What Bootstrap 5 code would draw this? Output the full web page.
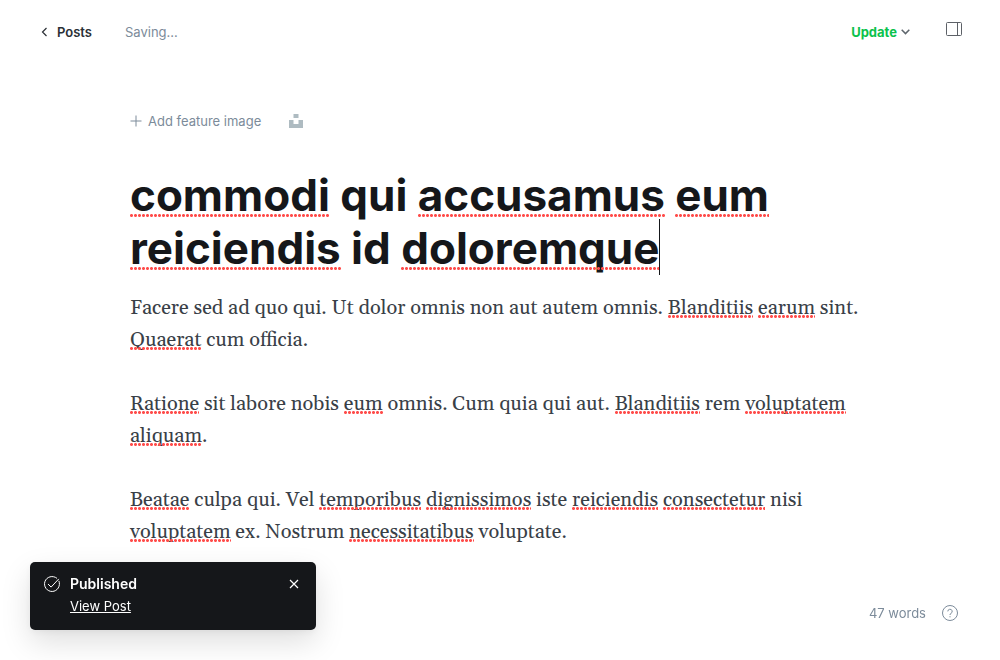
<!DOCTYPE html>
<html lang="en">
<head>
<meta charset="utf-8">
<meta name="viewport" content="width=device-width, initial-scale=1">
<title>Edit post</title>
<link href="https://cdn.jsdelivr.net/npm/bootstrap@5.3.0/dist/css/bootstrap.min.css" rel="stylesheet">
<style>
  body { font-family: Inter, "Liberation Sans", sans-serif; font-size: 13px; line-height: 20px; color: #15171a; background: #fff; }
  svg { display: block; fill: none; stroke: currentColor; }
  .topbar { padding: 22px 38px 0 40px; }
  .back-link { color: #2b3036; font-weight: 600; }
  .back-link + .muted { margin-left: 33px; }
  .muted { color: #7c8b9a; }
  .btn-plain { padding: 0; border: 0; background: none; color: inherit; font-size: inherit; line-height: inherit; }
  .update { color: #0bc24c; font-weight: 700; }
  .editor { max-width: 740px; margin: 69px auto 0; }
  .add-image { gap: 6px; margin-right: 28px; }
  .editor-title { margin: 38px 0 0; font-size: 44px; line-height: 53px; font-weight: 700; outline: 0; }
  .editor-body { margin-top: 17px; font-family: Georgia, Gelasio, "Liberation Serif", serif; font-size: 20px; line-height: 32px; color: #394047; outline: 0; }
  .editor-body p { margin: 0 0 32px; }
  .sp { position: relative; white-space: nowrap; }
  .sp::after { content: ""; position: absolute; left: 0; right: 0; bottom: 3px; height: 3px; background: radial-gradient(circle at 1.5px 1.5px, #ff4d4b 1px, transparent 2px) 0 0 / 4px 3px repeat-x; }
  .editor-title .sp::after { bottom: 5px; }
  .caret { position: absolute; width: 1px; height: 56px; background: #15171a; margin-top: -3px; }
  .notice { left: 30px; bottom: 30px; width: 286px; padding: 12px 17px 14px 14px; border-radius: 5px; background: #15171a; color: #fff; box-shadow: 0 12px 30px rgba(0,0,0,.13), 0 2px 8px rgba(0,0,0,.05); }
  .notice svg { margin-top: 2px; }
  .notice-text { margin-left: 10px; }
  .notice-title { margin-bottom: 2px; font-size: 14px; font-weight: 600; }
  .status { right: 42px; bottom: 37px; }
</style>
</head>
<body>
<header class="topbar d-flex align-items-start justify-content-between">
  <div class="d-flex align-items-center">
    <a class="back-link d-flex align-items-center text-decoration-none gap-2" href="#">
      <svg width="9" height="10" viewBox="0 0 9 10" stroke-width="1.2"><path d="M6.500 1 2.500 5l4 4"/></svg>Posts</a>
    <span class="muted">Saving...</span>
  </div>
  <div class="d-flex align-items-start">
    <button class="btn-plain update d-flex align-items-center gap-1" type="button">Update
      <svg width="9" height="6" viewBox="0 0 9 6" stroke="#5d656c" style="stroke:#5d656c" stroke-width="1.5"><path d="M.7.8 4.500 4.600 8.300.8"/></svg></button>
    <button class="btn-plain ms-4 ps-2" type="button" aria-label="Settings">
      <svg class="ms-1" width="16" height="14" viewBox="0 0 16 14" style="stroke:#5d6167"><rect x=".5" y=".5" width="15" height="13" rx="1"/><path d="M11.500.5v13"/></svg></button>
  </div>
</header>

<main class="editor">
  <div class="d-flex align-items-center muted">
    <button class="btn-plain add-image d-flex align-items-center" type="button">
      <svg width="12" height="12" viewBox="0 0 12 12"><path d="M6 .5v11M.5 6h11"/></svg>Add feature image</button>
    <button class="btn-plain" type="button" aria-label="Unsplash">
      <svg width="14" height="14" viewBox="0 0 14 14"><path d="M4.500 0h5v4h-5zM0 6h4.500v4h5V6H14v8H0z" style="fill:#aebbc1;stroke:none"/></svg></button>
  </div>
  <h1 class="editor-title" contenteditable="true" spellcheck="false"><span class="sp">commodi</span> qui <span class="sp">accusamus</span> <span class="sp">eum</span> <br><span class="sp">reiciendis</span> id <span class="sp">doloremque</span><span class="caret"></span></h1>
  <article class="editor-body" contenteditable="true" spellcheck="false">
    <p>Facere sed ad quo qui. Ut dolor omnis non aut autem omnis. <span class="sp">Blanditiis</span> <span class="sp">earum</span> sint. <span class="sp">Quaerat</span> cum officia.</p>
    <p><span class="sp">Ratione</span> sit labore nobis <span class="sp">eum</span> omnis. Cum quia qui aut. <span class="sp">Blanditiis</span> rem <span class="sp">voluptatem</span> <span class="sp">aliquam</span>.</p>
    <p><span class="sp">Beatae</span> culpa qui. Vel <span class="sp">temporibus</span> <span class="sp">dignissimos</span> iste <span class="sp">reiciendis</span> <span class="sp">consectetur</span> nisi <span class="sp">voluptatem</span> ex. Nostrum <span class="sp">necessitatibus</span> voluptate.</p>
  </article>
</main>

<aside class="notice position-fixed d-flex align-items-start" role="status">
  <svg class="flex-shrink-0" width="16" height="16" viewBox="0 0 16 16" stroke-linecap="round"><path d="M15 5.200A7.500 7.500 0 1 1 12.700 2.100M4.300 8.300l2.800 2.800 7.400-7.900"/></svg>
  <div class="notice-text flex-grow-1">
    <div class="notice-title">Published</div>
    <a class="text-white d-block" href="#">View Post</a>
  </div>
  <button class="btn-plain text-white" type="button" aria-label="Close">
    <svg class="mt-1" width="10" height="12" viewBox="0 0 10 12" stroke-width="1.2"><path d="m1 2 8 8M9 2 1 10"/></svg></button>
</aside>

<footer class="status muted position-fixed d-flex align-items-center gap-3">
  <span>47 words</span>
  <a class="muted" href="#" aria-label="Help">
    <svg width="16" height="16" viewBox="0 0 16 16"><circle cx="8" cy="8" r="7.5"/><path d="M5.800 6.400a2.200 2.200 0 1 1 3.200 2C8.300 8.700 8 9 8 10M8 11.200v1.100"/></svg></a>
</footer>
<script src="https://cdn.jsdelivr.net/npm/bootstrap@5.3.0/dist/js/bootstrap.bundle.min.js"></script>
</body>
</html>
